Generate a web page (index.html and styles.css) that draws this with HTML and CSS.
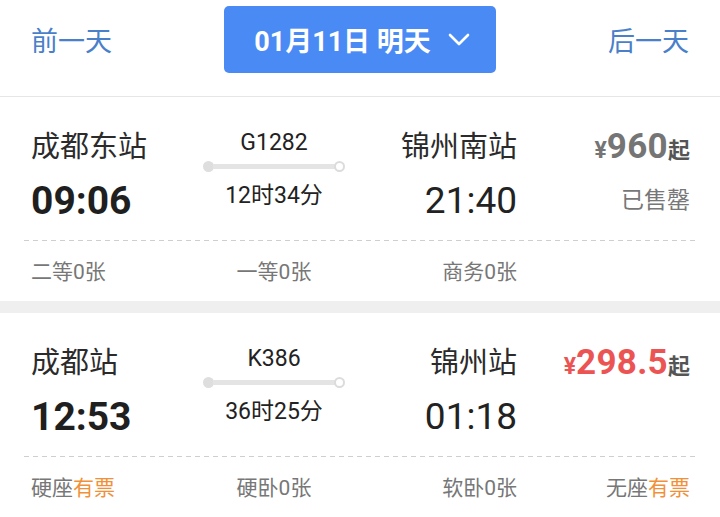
FILE: index.html
```html
<!DOCTYPE html>
<html lang="zh-CN">
<head>
<meta charset="utf-8">
<title>车次列表</title>
<link rel="stylesheet" href="styles.css">
</head>
<body>
<header class="datebar">
  <a class="nav prev">前一天</a>
  <button class="date-btn">01月11日 明天
    <svg class="chev" width="22" height="14" viewBox="0 0 22 14"><polyline points="2,2 11,11 20,2" fill="none" stroke="#fff" stroke-width="2.6" stroke-linecap="round" stroke-linejoin="round"/></svg>
  </button>
  <a class="nav next">后一天</a>
</header>

<section class="card">
  <div class="main">
    <div class="station from">成都东站</div>
    <div class="mid">
      <div class="train-no">G1282</div>
      <div class="timeline"><span class="dot start"></span><span class="bar"></span><span class="dot end"></span></div>
      <div class="duration">12时34分</div>
    </div>
    <div class="station to">锦州南站</div>
    <div class="price grey"><span class="yen">¥</span><span class="amt">960</span><span class="qi">起</span></div>
    <div class="time depart">09:06</div>
    <div class="time arrive">21:40</div>
    <div class="status">已售罄</div>
  </div>
  <div class="dash"></div>
  <div class="seats">
    <div class="seat s1">二等0张</div>
    <div class="seat s2">一等0张</div>
    <div class="seat s3">商务0张</div>
    <div class="seat s4"></div>
  </div>
</section>

<div class="gap"></div>

<section class="card">
  <div class="main">
    <div class="station from">成都站</div>
    <div class="mid">
      <div class="train-no">K386</div>
      <div class="timeline"><span class="dot start"></span><span class="bar"></span><span class="dot end"></span></div>
      <div class="duration">36时25分</div>
    </div>
    <div class="station to">锦州站</div>
    <div class="price red"><span class="yen">¥</span><span class="amt">298.5</span><span class="qi">起</span></div>
    <div class="time depart">12:53</div>
    <div class="time arrive">01:18</div>
    <div class="status"></div>
  </div>
  <div class="dash"></div>
  <div class="seats">
    <div class="seat s1">硬座<span class="avail">有票</span></div>
    <div class="seat s2">硬卧0张</div>
    <div class="seat s3">软卧0张</div>
    <div class="seat s4">无座<span class="avail">有票</span></div>
  </div>
</section>
</body>
</html>
```
FILE: styles.css
```css
* { box-sizing: border-box; }
html, body { margin: 0; padding: 0; background: #fff; }
body {
  width: 720px;
  font-family: Roboto, "Noto Sans CJK SC", "Noto Sans", sans-serif;
  color: #222;
  overflow: hidden;
}

.datebar {
  height: 97px;
  border-bottom: 1px solid #e6e6e6;
  display: grid;
  grid-template-columns: 1fr 272px 1fr;
  align-items: start;
  padding: 0 31px;
}
.nav {
  margin-top: 23px;
  font-size: 27px;
  line-height: 38px;
  color: #4a7fca;
}
.nav.next { justify-self: end; }
.date-btn {
  margin-top: 6px;
  height: 67px;
  width: 272px;
  border: 0;
  border-radius: 5px;
  background: #4a8af4;
  color: #fff;
  font-family: Roboto, "Noto Sans CJK SC", sans-serif;
  font-weight: 700;
  font-size: 27px;
  display: flex;
  align-items: center;
  justify-content: center;
  gap: 17px;
  padding: 0 0 0 4px;
}
.chev { display: block; margin-top: 1px; }

.card { padding: 0 24px; }
.main {
  display: grid;
  grid-template-columns: 172px 142px 172px 1fr;
  grid-template-rows: 40px 46px;
  row-gap: 11px;
  padding: 30px 6px 16px 7px;
}
.station { font-size: 29px; line-height: 40px; color: #2b2b2b; }
.from { grid-column: 1; grid-row: 1; }
.to { grid-column: 3; grid-row: 1; text-align: right; }
.mid {
  grid-column: 2;
  grid-row: 1 / 3;
  display: flex;
  flex-direction: column;
  align-items: stretch;
  padding-top: 2px;
}
.train-no { font-size: 23px; line-height: 28px; text-align: center; color: #222; }
.timeline {
  height: 18px;
  display: flex;
  align-items: center;
}
.dot { width: 11px; height: 11px; border-radius: 50%; flex: none; }
.dot.start { background: #dedede; }
.dot.end { background: #fff; border: 2px solid #dcdcdc; }
.bar { flex: 1; height: 5px; background: #e4e4e4; margin: 0 -1px; }
.duration { margin-top: 7px; font-size: 23px; line-height: 28px; text-align: center; color: #222; }

.time { font-size: 37px; line-height: 46px; grid-row: 2; }
.depart { grid-column: 1; font-weight: 700; font-size: 39px; color: #1f1f1f; }
.arrive { grid-column: 3; text-align: right; color: #222; }

.price {
  grid-column: 4; grid-row: 1;
  text-align: right;
  font-weight: 700;
  line-height: 40px;
  white-space: nowrap;
}
.price .yen { font-size: 23px; }
.price .amt { font-size: 35px; letter-spacing: 0.3px; }
.price .qi { font-size: 22px; color: #555; }
.price.grey { color: #757575; }
.price.red { color: #ec5454; }
.status {
  grid-column: 4; grid-row: 2;
  text-align: right;
  font-size: 23px;
  line-height: 46px;
  color: #777;
}

.dash {
  height: 1px;
  background: repeating-linear-gradient(to right, #cfcfcf 0 5px, transparent 5px 9px);
}
.seats {
  display: grid;
  grid-template-columns: 172px 142px 172px 1fr;
  padding: 16px 6px 14px 7px;
  font-size: 21px;
  line-height: 30px;
  color: #777;
}
.s2 { text-align: center; }
.s3, .s4 { text-align: right; }
.avail { color: #f0913a; }

.gap { height: 12px; background: #efefef; }
```
